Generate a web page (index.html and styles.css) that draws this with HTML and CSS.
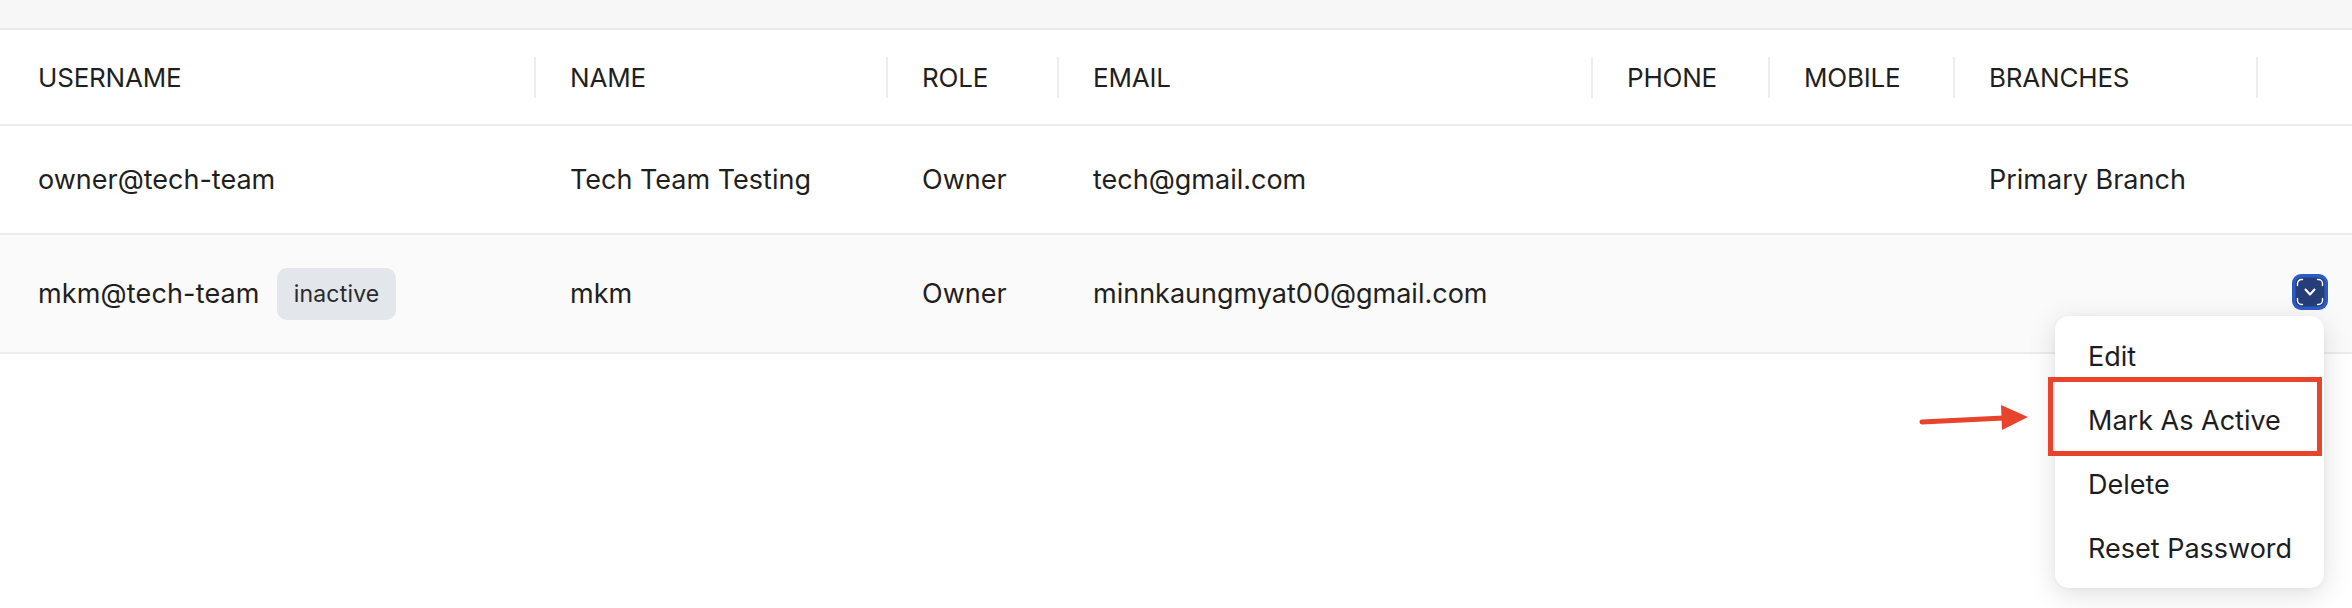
FILE: index.html
```html
<!DOCTYPE html>
<html lang="en">
<head>
<meta charset="utf-8">
<title>Users</title>
<link rel="stylesheet" href="styles.css">
</head>
<body>
<div class="page">
  <div class="topband"></div>
  <div class="table">
    <div class="row head">
      <div class="cell sep">USERNAME</div>
      <div class="cell sep">NAME</div>
      <div class="cell sep">ROLE</div>
      <div class="cell sep">EMAIL</div>
      <div class="cell sep">PHONE</div>
      <div class="cell sep">MOBILE</div>
      <div class="cell sep">BRANCHES</div>
      <div class="cell"></div>
    </div>
    <div class="row body">
      <div class="cell">owner@tech-team</div>
      <div class="cell">Tech Team Testing</div>
      <div class="cell">Owner</div>
      <div class="cell">tech@gmail.com</div>
      <div class="cell"></div>
      <div class="cell"></div>
      <div class="cell">Primary Branch</div>
      <div class="cell"></div>
    </div>
    <div class="row body alt">
      <div class="cell user">mkm@tech-team <span class="badge">inactive</span></div>
      <div class="cell">mkm</div>
      <div class="cell">Owner</div>
      <div class="cell">minnkaungmyat00@gmail.com</div>
      <div class="cell"></div>
      <div class="cell"></div>
      <div class="cell"></div>
      <div class="cell actions">
        <button class="toggle" type="button" aria-label="Actions">
          <svg width="36" height="36" viewBox="0 0 36 36">
            <rect x="0" y="0" width="36" height="36" rx="9" fill="#2b5cc6"/>
            <rect x="3.5" y="3.5" width="29" height="29" rx="6" fill="#263d78"/>
            <g fill="none" stroke="#ffffff" stroke-width="1.4" stroke-linecap="round">
              <path d="M5.5 11.5 V9.5 a4 4 0 0 1 4 -4 H10.5"/>
              <path d="M25.5 5.5 H26.5 a4 4 0 0 1 4 4 V11.5"/>
              <path d="M5.5 24.5 V26.5 a4 4 0 0 0 4 4 H10.5"/>
              <path d="M25.5 30.5 H26.5 a4 4 0 0 0 4 -4 V24.5"/>
            </g>
            <path d="M13.5 15.5 L18 20.5 L22.5 15.5" fill="none" stroke="#ffffff" stroke-width="2" stroke-linecap="round" stroke-linejoin="round"/>
          </svg>
        </button>
      </div>
    </div>
  </div>

  <ul class="menu">
    <li>Edit</li>
    <li>Mark As Active</li>
    <li>Delete</li>
    <li>Reset Password</li>
  </ul>
  <div class="highlight"></div>
  <svg class="arrow" width="120" height="40" viewBox="0 0 120 40">
    <path d="M4 25 L86 21" stroke="#e8442b" stroke-width="5" stroke-linecap="round" fill="none"/>
    <path d="M83 8 L110 20 L84 33 Z" fill="#e8442b"/>
  </svg>
</div>
</body>
</html>
```

FILE: styles.css
```css
* { box-sizing: border-box; }
html, body { margin: 0; padding: 0; background: #ffffff; }
body {
  font-family: Inter, "Noto Sans", "Liberation Sans", sans-serif;
  color: #1f1f21;
  width: 2352px;
  height: 608px;
  overflow: hidden;
}
.page { position: relative; width: 2352px; height: 608px; }
.topband {
  height: 30px;
  background: #f7f7f8;
  border-bottom: 2px solid #e9e9ed;
}
.row {
  display: grid;
  grid-template-columns: 536px 352px 171px 534px 177px 185px 303px 1fr;
  border-bottom: 2px solid #ececf0;
}
.cell {
  display: flex;
  align-items: center;
  padding: 0 0 0 34px;
  font-size: 27px;
  white-space: nowrap;
  position: relative;
}
.row .cell:first-child { padding-left: 38px; }
.head { height: 96px; }
.head .cell { font-size: 26px; letter-spacing: -0.2px; }
.head .sep::after {
  content: "";
  position: absolute;
  right: 0;
  top: 27px;
  height: 41px;
  width: 2px;
  background: #eeeeef;
}
.body { height: 109px; }
.alt { height: 119px; background: #fafafa; }
.user { gap: 17px; letter-spacing: 0.15px; }
.badge {
  display: inline-flex;
  align-items: center;
  height: 52px;
  padding: 0 17px;
  border-radius: 10px;
  background: #e3e6ea;
  font-size: 23px;
  letter-spacing: 0.2px;
  color: #2a2a2c;
}
.actions { justify-content: flex-end; padding-right: 27px; }
.toggle {
  width: 36px;
  height: 36px;
  padding: 0;
  border: 0;
  background: none;
  display: block;
  margin-top: -3px;
}
.toggle svg { display: block; }
.menu {
  position: absolute;
  left: 2055px;
  top: 316px;
  width: 269px;
  margin: 0;
  padding: 8px 0;
  list-style: none;
  background: #ffffff;
  border-radius: 14px;
  box-shadow: 0 6px 28px rgba(0, 0, 0, 0.13), 0 1px 4px rgba(0, 0, 0, 0.04);
}
.menu li {
  height: 64px;
  display: flex;
  align-items: center;
  padding-left: 33px;
  font-size: 27px;
  color: #1d1d1f;
}
.highlight {
  position: absolute;
  left: 2048px;
  top: 377px;
  width: 274px;
  height: 79px;
  border: 5px solid #e8442b;
}
.arrow {
  position: absolute;
  left: 1918px;
  top: 397px;
}
```
